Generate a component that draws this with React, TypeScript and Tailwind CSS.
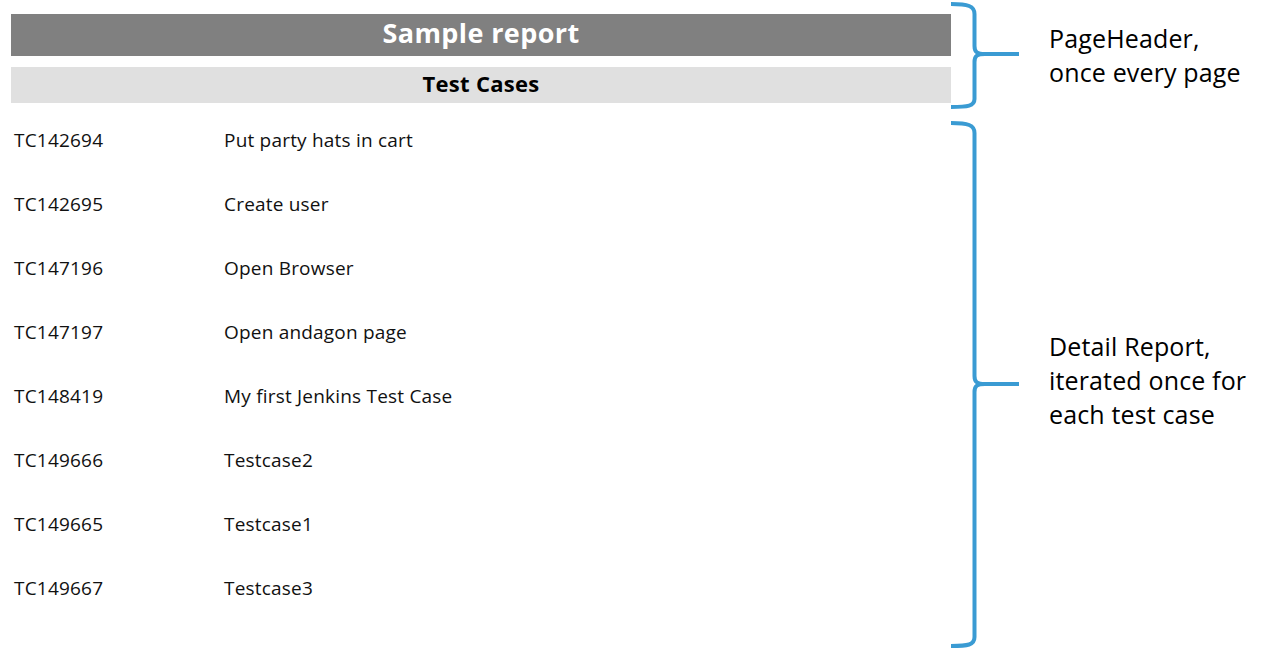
import React from "react";

const rows: [string, string][] = [
  ["TC142694", "Put party hats in cart"],
  ["TC142695", "Create user"],
  ["TC147196", "Open Browser"],
  ["TC147197", "Open andagon page"],
  ["TC148419", "My first Jenkins Test Case"],
  ["TC149666", "Testcase2"],
  ["TC149665", "Testcase1"],
  ["TC149667", "Testcase3"],
];

export default function App() {
  return (
    <div
      className="flex h-[650px] w-[1270px] bg-white text-[#111]"
      style={{ fontFamily: '"Open Sans", "Noto Sans", sans-serif' }}
    >
      <div className="w-[951px] shrink-0 pl-[11px] pt-[14px]">
        <div className="flex h-[42px] items-center justify-center bg-[#808080] pb-[3px] text-[27px] font-bold tracking-[0.4px] text-white">
          Sample report
        </div>
        <div className="mt-[11px] flex h-[36px] items-center justify-center bg-[#e0e0e0] pb-[3px] text-[22px] font-bold tracking-[0.3px] text-black">
          Test Cases
        </div>
        <div className="mt-[5px] flex flex-col">
          {rows.map(([id, name]) => (
            <div key={id} className="flex h-[64px] items-center text-[19px] tracking-[0.2px]">
              <span className="w-[213px] pl-[3px]">{id}</span>
              <span>{name}</span>
            </div>
          ))}
        </div>
      </div>
      <svg
        width="98"
        height="650"
        viewBox="0 0 98 650"
        className="shrink-0"
        fill="none"
        stroke="#3a9bd3"
        strokeWidth="4"
      >
        <path d="M0 4 C17 4 23.5 6 23.5 14 V46 C23.5 52 26 54 34 54 H68 M34 54 C26 54 23.5 56 23.5 62 V99 C23.5 106 17 107 0 107" />
        <path d="M0 123 C17 123 23.5 125 23.5 133 V376 C23.5 382 26 384 34 384 H68 M34 384 C26 384 23.5 386 23.5 392 V637 C23.5 645 17 646 0 646" />
      </svg>
      <div className="flex flex-col pt-[21px] text-[25px] leading-[34px] tracking-[0.15px] text-black">
        <div>
          PageHeader,
          <br />
          once every page
        </div>
        <div className="mt-[240px]">
          Detail Report,
          <br />
          iterated once for
          <br />
          each test case
        </div>
      </div>
    </div>
  );
}
